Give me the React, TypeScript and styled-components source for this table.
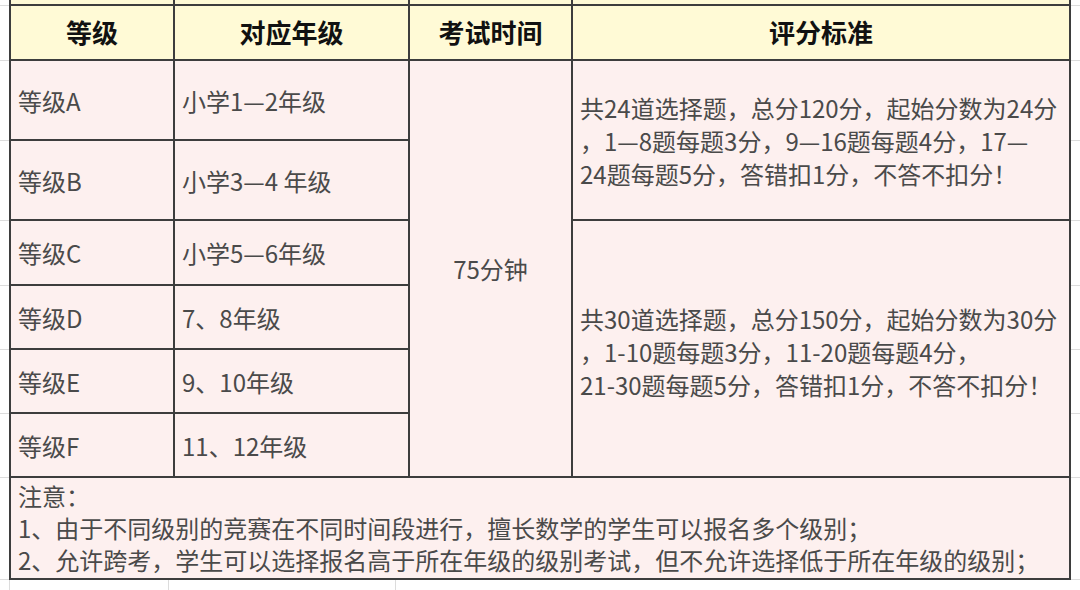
import styled, { createGlobalStyle } from 'styled-components';

const GlobalStyle = createGlobalStyle`
  html, body {
    margin: 0;
    padding: 0;
    background: #ffffff;
  }
  body {
    font-family: 'Noto Sans CJK SC', 'Noto Sans', sans-serif;
  }
`;

const LINE = '#3d3d3d';
const HEAD_BG = '#fffad6';
const BODY_BG = '#fdf0ef';
const GRID = '#dcdcdc';

// heights of the sheet rows, border line included
const ROWS = [6, 55, 80, 80, 65, 64, 64, 64, 102];

const Page = styled.div`
  width: 1080px;
  height: 590px;
  overflow: hidden;
  display: flex;
  flex-direction: column;
`;

const Sheet = styled.div`
  display: flex;
`;

const Gutter = styled.div`
  width: 9px;
  display: flex;
  flex-direction: column;
`;

const GutterRow = styled.div<{ h: number }>`
  box-sizing: border-box;
  height: ${({ h }) => h}px;
  border-bottom: 1px solid ${GRID};
`;

const Table = styled.div`
  width: 1062px;
  display: grid;
  grid-template-columns: 162px 233px 161px 496px;
  grid-template-rows: 4px 53px 78px 78px 63px 62px 62px 62px 100px;
  gap: 2px;
  padding: 0 2px 2px;
  box-sizing: border-box;
  background: ${LINE};
`;

const Cut = styled.div`
  background: ${HEAD_BG};
`;

const Head = styled.div`
  background: ${HEAD_BG};
  display: flex;
  align-items: center;
  justify-content: center;
  font-size: 26px;
  font-weight: 700;
  color: #111;
  padding-bottom: 2px;
`;

const Cell = styled.div<{ center?: boolean; rows?: string; offset?: number }>`
  background: ${BODY_BG};
  display: flex;
  flex-direction: column;
  justify-content: center;
  align-items: ${({ center }) => (center ? 'center' : 'flex-start')};
  padding: ${({ offset }) => offset ?? 0}px 7px 0 7px;
  font-size: 24px;
  line-height: 33px;
  color: #4a4a4a;
  white-space: nowrap;
  overflow: hidden;
  ${({ rows }) => (rows ? `grid-row: ${rows};` : '')}
`;

const Note = styled.div`
  grid-column: 1 / -1;
  background: ${BODY_BG};
  padding: 2px 7px 0;
  font-size: 24px;
  line-height: 32px;
  color: #4a4a4a;
  white-space: nowrap;
`;

const Line = styled.div`
  white-space: nowrap;
`;

const Below = styled.div`
  flex: 1;
  display: flex;
`;

const BelowCol = styled.div<{ w: number }>`
  width: ${({ w }) => w}px;
  border-right: 1px solid ${GRID};
  box-sizing: border-box;
`;

const grades = [
  ['等级A', '小学1—2年级'],
  ['等级B', '小学3—4 年级'],
  ['等级C', '小学5—6年级'],
  ['等级D', '7、8年级'],
  ['等级E', '9、10年级'],
  ['等级F', '11、12年级'],
];

function SideGutter() {
  return (
    <Gutter>
      {ROWS.map((h, i) => (
        <GutterRow key={i} h={h} />
      ))}
    </Gutter>
  );
}

export default function App() {
  return (
    <Page>
      <GlobalStyle />
      <Sheet>
        <SideGutter />
        <Table>
          <Cut />
          <Cut />
          <Cut />
          <Cut />

          <Head>等级</Head>
          <Head>对应年级</Head>
          <Head>考试时间</Head>
          <Head>评分标准</Head>

          {grades.map(([level, year], i) => {
            const row = i + 3;
            return [
              <Cell key={`l${i}`} rows={`${row}`}>
                {level}
              </Cell>,
              <Cell key={`y${i}`} rows={`${row}`}>
                {year}
              </Cell>,
              i === 0 ? (
                <Cell key="time" center rows="3 / 9">
                  75分钟
                </Cell>
              ) : null,
              i === 0 ? (
                <Cell key="s1" rows="3 / 5">
                  <Line>共24道选择题，总分120分，起始分数为24分</Line>
                  <Line>，1—8题每题3分，9—16题每题4分，17—</Line>
                  <Line>24题每题5分，答错扣1分，不答不扣分！</Line>
                </Cell>
              ) : null,
              i === 2 ? (
                <Cell key="s2" rows="5 / 9" offset={5}>
                  <Line>共30道选择题，总分150分，起始分数为30分</Line>
                  <Line>，1-10题每题3分，11-20题每题4分，</Line>
                  <Line>21-30题每题5分，答错扣1分，不答不扣分！</Line>
                </Cell>
              ) : null,
            ];
          })}

          <Note>
            <Line>注意：</Line>
            <Line>1、由于不同级别的竞赛在不同时间段进行，擅长数学的学生可以报名多个级别；</Line>
            <Line>2、允许跨考，学生可以选择报名高于所在年级的级别考试，但不允许选择低于所在年级的级别；</Line>
          </Note>
        </Table>
        <SideGutter />
      </Sheet>
      <Below>
        <BelowCol w={10} />
        <BelowCol w={159} />
        <BelowCol w={227} />
      </Below>
    </Page>
  );
}
